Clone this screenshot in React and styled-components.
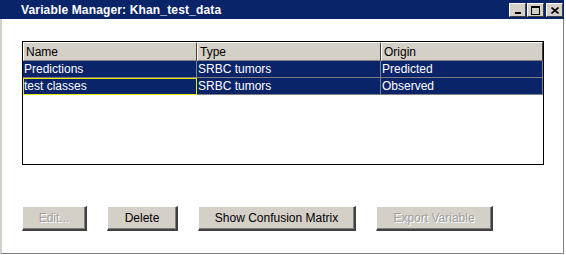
import styled, { createGlobalStyle } from 'styled-components';

const Global = createGlobalStyle`
  html, body {
    margin: 0;
    padding: 0;
    background: #ffffff;
    font-family: "Liberation Sans", Arial, sans-serif;
  }
`;

const Window = styled.div`
  width: 561px;
  height: 253px;
  border-left: 2px solid #d4d0c8;
  border-right: 1px solid #808080;
  border-bottom: 1px solid #808080;
  background: #ffffff;
  display: flex;
  flex-direction: column;
`;

const TitleBar = styled.div`
  height: 19px;
  background: #0a246a;
  display: flex;
  align-items: center;
  padding: 0 1px 0 21px;
  margin-left: -2px;
  margin-right: -1px;
`;

const Title = styled.div`
  flex: 1;
  color: #ffffff;
  font-weight: bold;
  font-size: 12px;
  letter-spacing: 0.15px;
`;

const Controls = styled.div`
  display: flex;
  gap: 1px;
  margin-top: 1px;
`;

const CtrlButton = styled.div`
  width: 15px;
  height: 12px;
  margin-left: ${(p) => (p.$sep ? 1 : 0)}px;
  background: #d4d0c8;
  border-top: 1px solid #ffffff;
  border-left: 1px solid #ffffff;
  border-right: 1px solid #404040;
  border-bottom: 1px solid #404040;
  display: flex;
  align-items: center;
  justify-content: center;
`;

const Content = styled.div`
  flex: 1;
  padding: 22px 0 0 20px;
  display: flex;
  flex-direction: column;
`;

const Table = styled.div`
  width: 520px;
  height: 122px;
  border: 1px solid #000000;
  background: #ffffff;
  display: grid;
  grid-template-columns: 174px 184px 1fr;
  grid-auto-rows: min-content;
  font-size: 12px;
`;

const HeaderCell = styled.div`
  height: 17px;
  line-height: 18px;
  padding-left: 2px;
  background: #d4d0c8;
  color: #000000;
  border-top: 1px solid #ffffff;
  border-left: 1px solid #ffffff;
  border-right: 1px solid #404040;
  border-bottom: 1px solid #808080;
`;

const Cell = styled.div`
  box-sizing: border-box;
  height: 17px;
  line-height: 16px;
  padding-left: 1px;
  background: #0a246a;
  color: #ffffff;
  border-right: 1px solid #808080;
  border-bottom: 1px solid #808080;
  ${(p) => p.$focused && `
    border: 1px solid #e8e800;
    line-height: 15px;
    padding-left: 0;
  `}
`;

const ButtonRow = styled.div`
  display: flex;
  gap: 20px;
  margin-top: 41px;
`;

const Button = styled.div`
  width: ${(p) => p.$w}px;
  height: 25px;
  box-sizing: border-box;
  background: #d4d0c8;
  border-top: 1px solid #ffffff;
  border-left: 1px solid #ffffff;
  border-right: 2px solid #404040;
  border-bottom: 2px solid #404040;
  box-shadow: inset -1px -1px 0 #808080;
  display: flex;
  align-items: center;
  justify-content: center;
  font-size: 12px;
  color: ${(p) => (p.$disabled ? '#a0a0a0' : '#000000')};
  text-shadow: ${(p) => (p.$disabled ? '1px 1px 0 #ffffff' : 'none')};
`;

const rows = [
  ['Predictions', 'SRBC tumors', 'Predicted'],
  ['test classes', 'SRBC tumors', 'Observed'],
];

export default function App() {
  return (
    <>
      <Global />
      <Window>
        <TitleBar>
          <Title>Variable Manager: Khan_test_data</Title>
          <Controls>
            <CtrlButton>
              <svg width="8" height="8" viewBox="0 0 8 8">
                <rect x="1" y="6" width="6" height="2" fill="#000" />
              </svg>
            </CtrlButton>
            <CtrlButton>
              <svg width="9" height="9" viewBox="0 0 9 9">
                <rect x="0.5" y="0.5" width="8" height="8" fill="none" stroke="#000" />
                <rect x="0" y="0" width="9" height="2" fill="#000" />
              </svg>
            </CtrlButton>
            <CtrlButton $sep>
              <svg width="8" height="7" viewBox="0 0 8 7">
                <path d="M0.5 0.5 L7.5 6.5 M7.5 0.5 L0.5 6.5" stroke="#000" strokeWidth="1.6" />
              </svg>
            </CtrlButton>
          </Controls>
        </TitleBar>
        <Content>
          <Table>
            <HeaderCell>Name</HeaderCell>
            <HeaderCell>Type</HeaderCell>
            <HeaderCell>Origin</HeaderCell>
            {rows.map((r, i) =>
              r.map((c, j) => (
                <Cell key={i + '-' + j} $focused={i === 1 && j === 0}>
                  {c}
                </Cell>
              ))
            )}
          </Table>
          <ButtonRow>
            <Button $w={65} $disabled>Edit...</Button>
            <Button $w={71}>Delete</Button>
            <Button $w={158}>Show Confusion Matrix</Button>
            <Button $w={117} $disabled>Export Variable</Button>
          </ButtonRow>
        </Content>
      </Window>
    </>
  );
}
